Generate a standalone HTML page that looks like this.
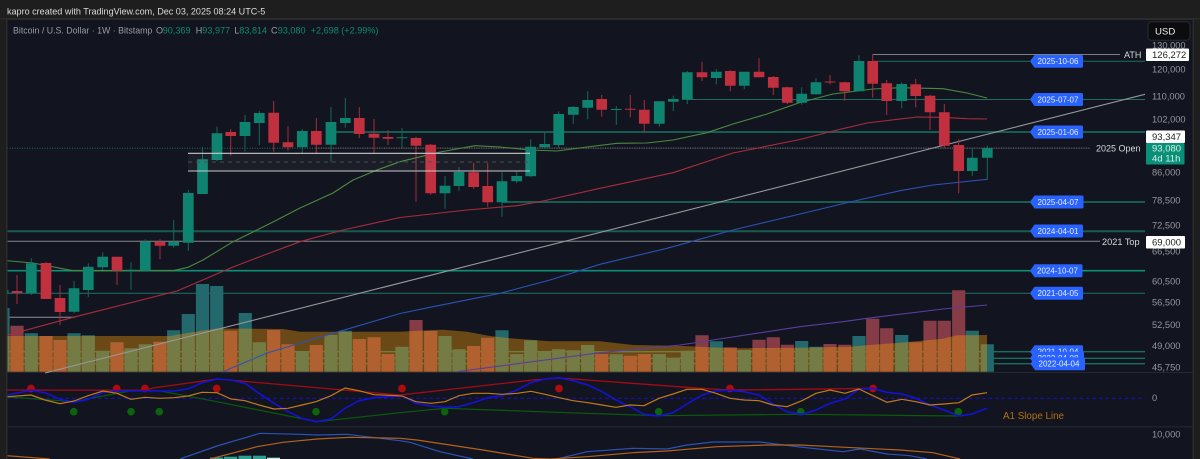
<!DOCTYPE html>
<html>
<head>
<meta charset="utf-8">
<style>
html,body{margin:0;padding:0;background:#1e1e1e;width:1200px;height:459px;overflow:hidden}
svg{display:block;filter:blur(.3px)}
text{font-family:"Liberation Sans",sans-serif}
.ax text{font-size:9.300px;fill:#94979e}
.lb text{font-size:8px;fill:#e8eeff;text-anchor:middle}
</style>
</head>
<body>
<svg width="1200" height="459" viewBox="0 0 1200 459" xmlns="http://www.w3.org/2000/svg">
<defs><clipPath id="c"><rect x="7.500" y="20" width="1185" height="439"/></clipPath></defs>
<rect width="1200" height="459" fill="#1e1e1e"/>
<rect x="0" y="18" width="1200" height="1.500" fill="#2b2b2b"/>
<rect x="6" y="19" width="1188" height="440" fill="#2b2b2b"/>
<rect x="7.500" y="20" width="1185" height="439" fill="#12151f"/>
<text x="7" y="14.500" font-size="9.050" fill="#dcdcdc">kapro created with TradingView.com, Dec 03, 2025 08:24 UTC-5</text>
<text y="33.500" font-size="9.100" fill="#989ca5"><tspan x="13" font-size="8.800">Bitcoin / U.S. Dollar · 1W · Bitstamp</tspan><tspan x="156">O</tspan><tspan fill="#0d8a70" x="162.700">90,369</tspan><tspan x="195.700">H</tspan><tspan fill="#0d8a70" x="202.300">93,977</tspan><tspan x="234.300">L</tspan><tspan fill="#0d8a70" x="239.300">83,814</tspan><tspan x="271">C</tspan><tspan fill="#0d8a70" x="277.700">93,080</tspan><tspan fill="#0d8a70" x="310.700">+2,698 (+2.99%)</tspan></text>
<g clip-path="url(#c)">
<rect x="7" y="372" width="1186" height="1" fill="#252831"/>
<rect x="7" y="426.300" width="1186" height="1" fill="#252831"/>
<!-- horizontal lines -->
<g fill="none">
<path d="M873 54.500H1120" stroke="#7b7d84"/>
<path d="M873 61.300H1145" stroke="#1a6e5f"/>
<path d="M687 99.500H1145" stroke="#1a6e5f"/>
<path d="M331 132H1145" stroke="#175c50" stroke-width="2"/>
<path d="M502 202H1145" stroke="#175c50" stroke-width="2"/>
<path d="M7 231.300H1145" stroke="#175c50" stroke-width="2"/>
<path d="M7 241.300H1100" stroke="#83868c"/>
<path d="M7 270.700H1145" stroke="#0b8f76" stroke-width="1.600"/>
<path d="M7 293.300H1145" stroke="#1a7566"/>
<path d="M7 317.300H75" stroke="#8d9096"/>
<path d="M7 148.300H316" stroke="#1b6a5c" stroke-dasharray="1 1.500"/>
<path d="M316 148.100H1090" stroke="#6d7076" stroke-dasharray="1 .7"/>
<path d="M7 351.700H1145M7 358.300H1145M7 363.700H1145" stroke="#1a6e60" stroke-width="1.300"/>
</g>
<!-- volume bars teal -->
<g fill="none" stroke-width="13.200">
<path stroke="#22686c" d="M31.300 371.700V333.300M74 371.700V333.300M88.300 371.700V335.300M102.700 371.700V350.700M131 371.700V348.300M145.300 371.700V344.300M173.700 371.700V330.300M188.300 371.700V314M202.500 371.700V284M216.700 371.700V286M245.300 371.700V313M259.300 371.700V342.300M302.300 371.700V351.700M331 371.700V335M345.300 371.700V330.700M402 371.700V346.700M445 371.700V336M459 371.700V349.300M502 371.700V330.300M516.700 371.700V354M530.700 371.700V340.300M544.700 371.700V351.700M558.700 371.700V349.300M573.300 371.700V350.300M587.700 371.700V345M616.300 371.700V354.300M659.300 371.700V354M673.300 371.700V358M687.300 371.700V350.700M716.300 371.700V341.300M744.300 371.700V350M801.700 371.700V341M816 371.700V346.700M859 371.700V336M901.700 371.700V335M972.300 371.700V330.700M987.300 371.700V344.300M3 371.700V308"/>
<path stroke="#853c47" d="M17 371.700V325.700M46 371.700V336M60 371.700V340M117 371.700V342.300M160 371.700V341.700M230.700 371.700V330.700M273.700 371.700V330M288 371.700V344.300M316.300 371.700V345M359.300 371.700V339M374 371.700V337.300M388 371.700V354M416 371.700V320M430.700 371.700V331M473.700 371.700V346M487.700 371.700V337.700M601.700 371.700V354M630.300 371.700V355.700M644.300 371.700V354M702 371.700V335.300M730.300 371.700V347.300M759 371.700V339.700M773.300 371.700V337.300M787.300 371.700V344.700M830 371.700V344M844.700 371.700V344.700M872.700 371.700V318.700M886.700 371.700V328.300M915.700 371.700V342.300M930 371.700V320.700M944.300 371.700V320.700M958.700 371.700V290.300"/>
</g>
<path fill="#f0990c" fill-opacity=".4" d="M7 336H170L200 331L217 328.500L283 329L300 331.700H400L433 330L443 329.700L467 331.700L490 336L510 338.300L550 341.300L600 341.300L633 345L683 346L700 346.700L733 348.300L800 347.700L850 346.700L867 345.300L900 342.700L943 338.700L957 335.300L987 335V371.700H7Z"/>
<!-- MAs -->
<g fill="none" stroke-width="1.100" stroke-linejoin="round">
<path stroke="#4b8a3f" d="M7 260.700L33 263L73 270.700L173 270.700L188 267.300L203 260L233 241.700L257 230L273 222L300 208L333 193L353 180L377 170L400 161.700L440 152L475 145.700L500 147L530 150L557 151L587 147L617 143.300L647 143L673 140L707 132.700L733 124L767 114L800 102.500L833 94L873 89L900 87.700L943 88.700L967 93L987 98"/>
<path stroke="#a82d3e" d="M7 335.300L73 317.300L177 291L233 267L267 254L300 241.700L343 230L400 217.500L467 210L517 205.700L543 201L600 188.300L673 172.700L733 153L800 139.500L833 131L867 123L917 117L943 117.300L967 118.700L987 119"/>
<path stroke="#2b52b5" d="M223 371.700L267 353L333 333.300L400 313.500L433 306.700L500 293.300L550 280L600 264.300L667 248.300L733 230L800 214L850 202L900 190.700L933 185L987 179.300"/>
<path stroke="#5a3e9e" d="M457 371.700L600 352.700L680 345L800 326.700L843 321.700L867 318.300L943 309L987 305"/>
<path stroke="#97979b" d="M45 373L1145 94.300"/>
</g>
<!-- candles -->
<path fill="none" stroke="#11695a" stroke-width="1" d="M8 290V294M31.300 258.300V295M74 280.700V313.300M88.300 263.300V297.300M102.700 252.300V270M131 262.300V290M145.300 239.300V270.700M173.700 220V247.700M188.300 190V250.700M202.500 147V194M217 126.700V161M245 115V151.700M259.300 111V145M302.300 129V154M331 107V161.700M345.300 98V127.700M402 128V147.700M445 176V208.700M459 167V190.700M502 172.300V216.700M516.700 171.700V183.300M530.700 139.300V176.700M544.700 132.700V147.700M558.700 111.300V147.700M573.300 106V124M587.700 91V119.300M616.300 106V125M659.300 101V126.700M673.300 95.700V111M687.300 71V104M716.300 69.300V84.300M744.300 71.700V89.300M801.700 87.300V104.700M816 78V94.700M859 55.300V91.300M901.700 82.300V108.300M972.300 148.700V175.700M987.300 145.700V180.300"/>
<path fill="none" stroke="#a92c3c" stroke-width="1" d="M17 275V304M46 262V299M60 285V325M117 256.700V285M160 239.300V259.300M230.700 129V155.700M273.700 101V151.700M288 126V150.700M316.300 118V154M359.300 107V138M374 119V153M388 130V145M416 136.700V202M430.700 144V195M473.700 162.700V189M487.700 163.300V206.700M601.700 95V116.700M630.300 95V117.300M644.300 100V131.700M702 61.700V81M730.300 70.300V91.300M759 58.300V77.300M773.300 76V95M787.300 86.700V104M830 75V84.300M844.700 81.700V100.700M872.700 54V97.700M886.700 80V115M915.700 79V107.300M930 95V130M944.300 104V148.300M958.700 139.300V193.300"/>
<path fill="none" stroke="#0e8470" stroke-width="10.700" d="M3 290V294M31.300 263.300V293.300M74 288.300V311.700M88.300 266.700V290M102.700 256.700V267.300M131 269.800V270.800M145.300 241.700V270.700M173.700 241.700V245.700M188.300 193V242.700M202.500 159.300V194M217 133.300V160M245 122V136M259.300 113V123M302.300 131V147.300M331 122V144.700M345.300 118V123M402 137.300V138.300M445 185.700V193.300M459 172V186M502 181.300V202.300M516.700 176V181.300M530.700 146.700V176.300M544.700 144V147.300M558.700 114V145M573.300 107V114.700M587.700 100V107.700M616.300 109V110M659.300 101.300V123.700M673.300 99V101.700M687.300 72.300V99.700M716.300 71.700V78M744.300 71.700V85.700M801.700 93.700V102.700M816 82.300V94.300M859 61V91.300M901.700 84V101M972.300 157.700V171M987.300 148.300V157.700"/>
<path fill="none" stroke="#c0303f" stroke-width="10.700" d="M17 291V293M46 263V299M60 298V312M117 256.700V270.700M160 241.700V245.700M230.700 132V136M273.700 112.700V142.700M288 142.300V147.300M316.300 131V144.700M359.300 118V134M374 133.700V137.700M388 137V138.700M416 138V145.700M430.700 144.700V193.300M473.700 172.300V187M487.700 186V202.300M601.700 99V109.700M630.300 108.800V109.800M644.300 109.700V123.700M702 72.300V77.300M730.300 71V85.700M759 71.700V77.300M773.300 77V87.700M787.300 87.300V102.700M830 81.500V82.500M844.700 82.300V91.300M872.700 61V83.700M886.700 83.300V101M915.700 84.300V96M930 95.700V112.300M944.300 112.300V145.700M958.700 145V171"/>
<!-- range box -->
<rect x="188" y="153.300" width="342" height="18" fill="#fff" fill-opacity=".04"/>
<path d="M188 153.300H530M188 171H530" stroke="#c9cace" stroke-width="1.100" fill="none"/>
<path d="M188 162H530" stroke="#4a4d55" stroke-dasharray="4 4" fill="none"/>
<!-- indicator -->
<path d="M7 398.300H1145" stroke="#1414c8" stroke-dasharray="3.500 3" fill="none"/>
<g fill="#ad0b0e"><circle cx="31" cy="388.500" r="3.900"/><circle cx="116.700" cy="388.500" r="3.900"/><circle cx="145" cy="388.500" r="3.900"/><circle cx="216.700" cy="388.500" r="3.900"/><circle cx="402" cy="388.500" r="3.900"/><circle cx="559" cy="388.500" r="3.900"/><circle cx="730" cy="388.500" r="3.900"/><circle cx="873" cy="388.500" r="3.900"/></g>
<g fill="#0b640b"><circle cx="73.700" cy="411.700" r="3.800"/><circle cx="131" cy="411.700" r="3.800"/><circle cx="159.300" cy="411.700" r="3.800"/><circle cx="316" cy="411.700" r="3.800"/><circle cx="444.700" cy="411.700" r="3.800"/><circle cx="658.700" cy="411.700" r="3.800"/><circle cx="800.700" cy="411.700" r="3.800"/><circle cx="958.300" cy="411.700" r="3.800"/></g>
<g fill="none" stroke-linejoin="round">
<path stroke="#0b5a0b" stroke-width="1.200" d="M7 397L73 401.700L131 390.700L159 390.700L217 401.700L317 421.700L400 412.700L445 408.300L567 412.700L659 415.700L800 414.300L958 416"/>
<path stroke="#a30b16" stroke-width="1.300" d="M7 390L145 390.300L153 388L217 379L400 395L533 380L560 378L700 388.300L730 390L800 389.300L873 388.300"/>
<path stroke="#1212d8" stroke-width="1.600" d="M7 395L31 390.300L45 392.700L60 399.300L74 402.300L88 399.300L103 392.300L117 391L174 391L188 389L202 382.700L217 379L231 380L245 383.300L259 393.300L274 403.300L288 411.700L302 418.300L316 421.700L331 419L345 408.300L359 400.700L374 397.700L388 396.700L402 395.700L416 403.300L431 406L445 407.300L459 406.700L473 402.700L488 397.700L502 395.700L517 390L531 382.700L545 379L559 377.700L573 380.700L588 385L602 391.700L616 400L630 406.700L644 414.300L659 416L673 412.700L687 404L702 395L716 390.700L730 390.300L744 391.700L759 395L773 404L787 411.700L802 414.300L816 410L830 403.300L845 399L859 389.300L873 388.300L887 392.300L902 394L916 398.300L930 405L944 410L959 416L972 414L987 408.300"/>
<path stroke="#c07a1c" stroke-width="1.200" d="M7 396.700L31 395L45 400L60 403.700L74 401L88 395.700L103 391L117 393.300L131 399.300L145 397.300L160 398.300L174 397.700L188 396L202 392.300L217 392.700L231 399L245 400.700L259 405L274 409L288 408.300L302 405L316 401.700L331 395.700L345 388L359 390.700L374 394.700L388 395.300L402 396L416 401.700L431 403.300L445 401.700L459 395.700L473 393.300L488 393.300L502 394.300L517 393.300L531 391.300L545 394.300L559 397.700L573 400.700L588 402.700L602 405L616 407.300L630 405L644 405.700L659 398.300L673 394L687 389.300L702 389.300L716 393.300L730 398.300L744 400L759 400.700L773 405L787 406.700L802 400.700L816 393.300L830 390L845 393.300L859 389L873 395.700L887 402.300L902 399.300L916 401.700L930 405L944 404L959 402.700L972 395L987 392.700"/>
</g>
<!-- bottom pane -->
<rect x="210" y="457.500" width="13" height="2" fill="#2d9f90"/><rect x="224" y="456.700" width="13" height="3" fill="#2d9f90"/><rect x="238.500" y="455.700" width="13" height="4" fill="#2d9f90"/><rect x="253" y="455.700" width="13" height="4" fill="#2d9f90"/><rect x="267" y="457.700" width="13" height="2" fill="#bfe5e0"/>
<g fill="none" stroke-width="1.200">
<path stroke="#2b52b5" d="M180 459L217 446L260 433.300L300 434.300L317 435L347 434.300L400 440.700L410 442.300L440 451.700L473 459M557 459L587 451.700L633 448.300L667 449L687 445L713 442L760 442L800 447L843 451.700L860 449L887 454L910 455.700L927 459"/>
<path stroke="#b3621f" d="M7 455.700L50 459M210 459L257 446.700L283 442.300L317 439L350 437.300L400 438.300L417 440L483 450L533 458.300L550 459L587 456.700L633 452.700L667 451L717 446.700L767 445L800 445L833 446.700L900 450L933 452.700L960 459"/>
</g>
<!-- blue labels -->
<g class="lb">
<path fill="#2962ff" d="M1030 61.300l4.500-6.300h47a1.500 1.500 0 0 1 1.500 1.500v9.800a1.500 1.500 0 0 1-1.500 1.500h-47z"/><text x="1058" y="64.200">2025-10-06</text>
<path fill="#2962ff" d="M1030 99.500l4.500-6.500h47a1.500 1.500 0 0 1 1.500 1.500v10a1.500 1.500 0 0 1-1.500 1.500h-47z"/><text x="1058" y="102.400">2025-07-07</text>
<path fill="#2962ff" d="M1030 132l4.500-6.500h47a1.500 1.500 0 0 1 1.500 1.500v10a1.500 1.500 0 0 1-1.500 1.500h-47z"/><text x="1058" y="134.900">2025-01-06</text>
<path fill="#2962ff" d="M1030 202l4.500-6.500h47.500a1.500 1.500 0 0 1 1.500 1.500v10a1.500 1.500 0 0 1-1.500 1.500h-47.500z"/><text x="1058" y="204.900">2025-04-07</text>
<path fill="#2962ff" d="M1030 231l4.500-6.500h47a1.500 1.500 0 0 1 1.500 1.500v10a1.500 1.500 0 0 1-1.500 1.500h-47z"/><text x="1058" y="233.900">2024-04-01</text>
<path fill="#2962ff" d="M1030 270.700l4.500-6.500h46.500a1.500 1.500 0 0 1 1.500 1.500v10a1.500 1.500 0 0 1-1.500 1.500h-46.500z"/><text x="1057.500" y="273.600">2024-10-07</text>
<path fill="#2962ff" d="M1030 293.300l4.500-6.500h47a1.500 1.500 0 0 1 1.500 1.500v10a1.500 1.500 0 0 1-1.500 1.500h-47z"/><text x="1058" y="296.200">2021-04-05</text>
<path fill="#2962ff" d="M1030 351.700l4.500-6.500h47a1.500 1.500 0 0 1 1.500 1.500v10a1.500 1.500 0 0 1-1.500 1.500h-47z"/><text x="1058" y="354.600">2021-10-04</text>
<path fill="#2962ff" d="M1030 358.300l4.500-6.500h48a1.500 1.500 0 0 1 1.500 1.500v10a1.500 1.500 0 0 1-1.500 1.500h-48z"/><text x="1058" y="361.200">2022-04-08</text>
<path fill="#2962ff" d="M1030.500 363.700l4.500-6.500h48.500a1.500 1.500 0 0 1 1.500 1.500v10a1.500 1.500 0 0 1-1.500 1.500h-48.500z"/><text x="1059" y="366.600">2022-04-04</text>
</g>
<!-- axis -->
<g class="ax">
<text x="1152" y="48.500">130,000</text>
<text x="1152" y="72.500">120,000</text>
<text x="1152" y="99.500">110,000</text>
<text x="1152" y="122.500">102,000</text>
<text x="1152" y="175.500">86,000</text>
<text x="1152" y="203.500">78,500</text>
<text x="1152" y="228.500">72,500</text>
<text x="1152" y="254.500">66,500</text>
<text x="1152" y="284.500">60,500</text>
<text x="1152" y="305.500">56,500</text>
<text x="1152" y="328">52,500</text>
<text x="1152" y="349">49,000</text>
<text x="1152" y="370.500">45,750</text>
<text x="1152" y="401">0</text>
<text x="1152" y="437.500">10,000</text>
</g>
<!-- line text labels -->
<text x="1124" y="58" font-size="9" fill="#d6d7da">ATH</text>
<text x="1096" y="151.600" font-size="9" fill="#d6d7da">2025 Open</text>
<text x="1102" y="244.800" font-size="9.200" fill="#d6d7da">2021 Top</text>
<text x="1003" y="419" font-size="9.800" fill="#b56f10">A1 Slope Line</text>
<!-- price tags -->
<rect x="1146" y="48.500" width="43" height="12.500" rx="1" fill="#fff"/>
<text x="1152" y="58" font-size="9.500" fill="#222">126,272</text>
<rect x="1146" y="130.500" width="39" height="12.500" rx="1" fill="#fff"/>
<text x="1152" y="140.200" font-size="9.500" fill="#222">93,347</text>
<rect x="1146" y="143" width="38.500" height="21.500" rx="1" fill="#0a9078"/>
<text x="1152" y="151.700" font-size="9.500" fill="#d5efe9">93,080</text>
<text x="1152" y="161.500" font-size="9.500" fill="#d5efe9">4d 11h</text>
<rect x="1146" y="236" width="39" height="12.500" rx="1" fill="#fff"/>
<text x="1152" y="245.300" font-size="9.500" fill="#222">69,000</text>
<!-- USD button -->
<rect x="1148" y="21.700" width="42" height="18.500" rx="3.500" fill="#0c0c0e" stroke="#2a2c33"/>
<text x="1155" y="34.500" font-size="9.600" fill="#eee">USD</text>
</g>
</svg>
</body>
</html>
